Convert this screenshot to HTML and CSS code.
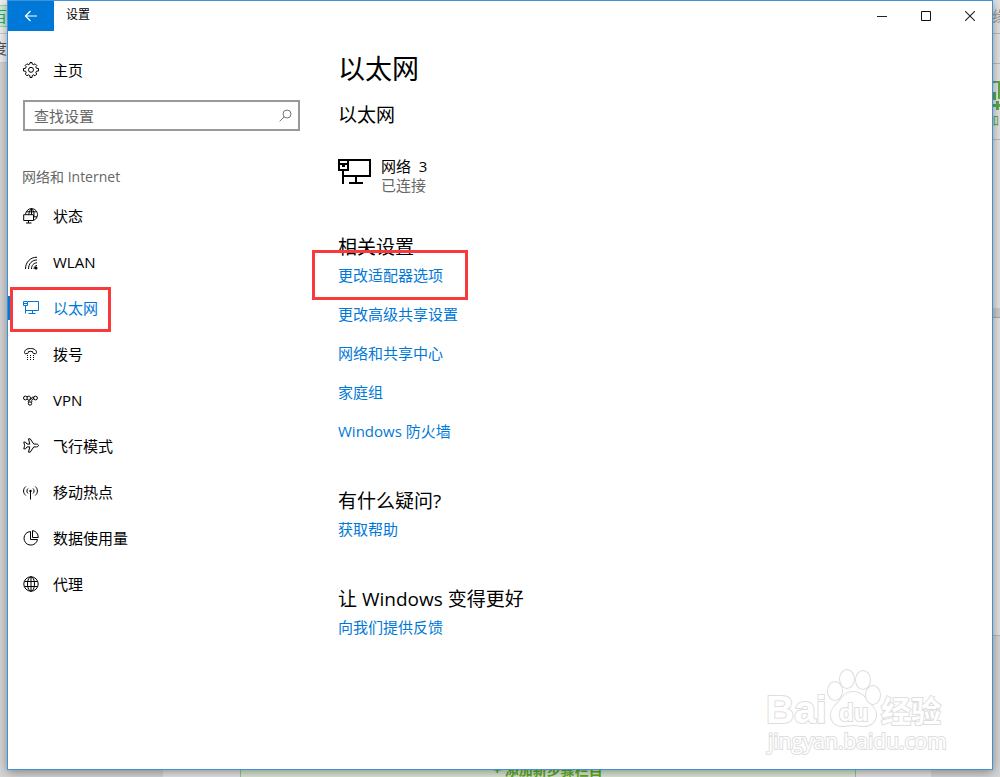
FILE: index.html
```html
<!DOCTYPE html>
<html lang="zh-CN">

<head>
  <meta charset="utf-8">
  <title>设置</title>
  <link rel="stylesheet" href="styles.css">
</head>

<body>

  <div class="desktop">

    <!-- The browser page that shows around the window's edges -->
    <div class="behind" aria-hidden="true">
      <div class="behind-left"><span class="behind-tab">百</span><span class="behind-bar">度</span></div>
      <div class="behind-right">
        <span class="behind-link">缘</span>
        <span class="behind-tool">
          <svg width="12" height="30" viewBox="0 0 12 30"><path d="M0 1h8M6 0v18" stroke="#5cab4e" stroke-width="2" fill="none"/><path d="M0 11h3v8H0zM0 23h7v3H0zM3 20h3v9H3z" fill="#5cab4e"/></svg>
          <span class="behind-label">加</span>
        </span>
        <span class="behind-row"></span>
      </div>
      <div class="behind-bottom"><span>+ 添加新步骤栏目</span></div>
    </div>

    <div class="window">

      <header class="titlebar">
        <button class="back-button" type="button" aria-label="返回">
          <svg width="14" height="12" viewBox="0 0 14 12"><path d="M13 6H1.5M6.5 1L1.5 6l5 5" fill="none" stroke="#fff" stroke-width="1.2"/></svg>
        </button>
        <span class="titlebar-text">设置</span>
        <button class="window-button" type="button" aria-label="最小化">
          <svg width="10" height="10" viewBox="0 0 10 10"><path d="M0 5.5h10" stroke="#222"/></svg>
        </button>
        <button class="window-button" type="button" aria-label="最大化">
          <svg width="10" height="10" viewBox="0 0 10 10"><path d="M.5.5h9v9h-9z" fill="none" stroke="#111"/></svg>
        </button>
        <button class="window-button" type="button" aria-label="关闭">
          <svg width="10" height="10" viewBox="0 0 10 10"><path d="M0 0l10 10M10 0L0 10" stroke="#222" stroke-width="1.1"/></svg>
        </button>
      </header>

      <div class="content">

        <nav class="sidebar">
          <a class="nav-link" href="#">
            <svg class="icon" viewBox="0 0 16 16"><path d="M6.8 2 7 .5h2L9.200 2l1.600.7L12 1.700 13.800 3.500l-1 1.200.7 1.600 2 .2v2.500l-2 .2-.7 1.600 1 1.200L12 13.800l-1.200-1-1.600.7-.2 2H7l-.2-2-1.600-.7-1.200 1L2.200 12l1-1.200-.7-1.600-2-.2V6.500l2-.2.7-1.600-1-1.200L4 1.700l1.200 1z" fill="none" stroke="currentColor"/><circle cx="8" cy="7.800" r="2.500" fill="none" stroke="currentColor"/></svg>
            主页
          </a>

          <form class="search" action="#">
            <input class="search-input" type="search" placeholder="查找设置" aria-label="查找设置">
            <button class="search-button" type="submit" aria-label="搜索">
              <svg width="13" height="13" viewBox="0 0 13 13"><circle cx="8" cy="5" r="4" fill="none" stroke="#777"/><path d="M5.2 7.8L.6 12.4" stroke="#777"/></svg>
            </button>
          </form>

          <h2 class="nav-title">网络和 Internet</h2>

          <ul class="nav-list">
            <li><a class="nav-link" href="#">
              <svg class="icon" viewBox="0 0 16 16"><g fill="none" stroke="currentColor"><path d="M2.500 6C3.200 2.800 5.500.600 8.500.600c3.300 0 6 2.700 6 6 0 2.600-1.500 4.700-3.500 5.500M8.500.600C7 2 6 3.800 5.800 6.500M8.500.600c2.200 1.800 3 5 2.300 8.400M8.500.600v6M3.500 3.800h10M10.500 8.800h3.500"/><path d="M.7 6.700h9.800v5.800H.7zM5.500 12.500v2.500M3 15h5.500"/></g></svg>
              状态</a></li>
            <li><a class="nav-link" href="#">
              <svg class="icon" viewBox="0 0 16 16"><g fill="none" stroke="currentColor"><path d="M2.500 15C2.500 8 7.500 3.200 14 3.200M5.500 15c0-5.300 3.500-9 8.500-9M8.500 15c0-3.700 2.300-6.200 5.500-6.200M11 15c0-2 1.200-3.500 3-3.500"/></g><circle cx="13" cy="14" r="1.500" fill="currentColor"/></svg>
              WLAN</a></li>
            <li class="active"><a class="nav-link" href="#" aria-current="page">
              <svg class="icon" viewBox="0 0 16 16"><g fill="none" stroke="currentColor"><path d="M5 1.500h10.500v9H3M9.500 10.500v2.500M5.500 13.500h7M.5 1.500h4v4h-4zM2.500 5.500v8M.5 3.500h4"/></g></svg>
              以太网</a></li>
            <li><a class="nav-link" href="#">
              <svg class="icon" viewBox="0 0 16 16"><path d="M1.500 6.500C1.500 4 4 2.500 7.500 2.500s6 1.500 6 4c0 .8-.5 1.300-1.200 1.200l-1.500-.2c-.8-.1-1.200-.5-1.200-1.200v-.7c-1.400-.4-2.800-.4-4.200 0v.7c0 .7-.4 1.100-1.200 1.200l-1.500.2c-.7.1-1.200-.4-1.200-1.200z" fill="none" stroke="currentColor"/><path d="M4 9h1v1H4zM7 9h1v1H7zM10 9h1v1h-1zM4 11h1v1H4zM7 11h1v1H7zM10 11h1v1h-1zM4 13h1v1H4zM7 13h1v1H7zM10 13h1v1h-1z" fill="currentColor"/></svg>
              拨号</a></li>
            <li><a class="nav-link" href="#">
              <svg class="icon" viewBox="0 0 16 16"><g fill="none" stroke="currentColor"><circle cx="2.400" cy="6" r="1.900"/><circle cx="12.500" cy="6" r="1.900"/><circle cx="7" cy="11.500" r="1.700"/><path d="M4 5C5.500 3.500 7.500 4 7.500 6c0 2-3.200 2.500-2 4.500M4 7c1 1 2.500 1.800 3.500.5L9.500 5l1.300.3M8.500 10.500c1-1.500-.5-2 .5-3l2-1"/></g></svg>
              VPN</a></li>
            <li><a class="nav-link" href="#">
              <svg class="icon" viewBox="0 0 16 16"><path d="M5.500.8h1.700l3.600 5.300h2.700c1 0 2 .6 2 1.400s-1 1.400-2 1.400h-2.700l-3.600 5.300H5.500l1.300-5.300H4l-1.500 2H.8l.8-3.400-.8-3.400h1.700l1.500 2h2.800z" fill="none" stroke="currentColor"/></svg>
              飞行模式</a></li>
            <li><a class="nav-link" href="#">
              <svg class="icon" viewBox="0 0 16 16"><g fill="none" stroke="currentColor"><path d="M2.800 2.500c-3 2.500-3 6.500 0 9M5 4.500c-1.500 1.500-1.500 3.500 0 5M12.200 2.500c3 2.500 3 6.500 0 9M10 4.500c1.500 1.500 1.500 3.500 0 5M7.500 7v8.500"/></g><circle cx="7.500" cy="7" r="1.200" fill="currentColor"/></svg>
              移动热点</a></li>
            <li><a class="nav-link" href="#">
              <svg class="icon" viewBox="0 0 16 16"><g fill="none" stroke="currentColor"><path d="M7.500 1.500A6.800 6.800 0 1 0 14.500 9.500H7.500zM9.500.6v6.900h5.800C15.200 3.800 13 1 9.500.6z"/></g></svg>
              数据使用量</a></li>
            <li><a class="nav-link" href="#">
              <svg class="icon" viewBox="0 0 16 16"><g fill="none" stroke="currentColor"><circle cx="8" cy="8" r="7.200"/><ellipse cx="8" cy="8" rx="3.500" ry="7.200"/><path d="M8 .8v14.400M1.500 5.500h13M1.500 10.500h13"/></g></svg>
              代理</a></li>
          </ul>
        </nav>

        <main class="main">
          <h1>以太网</h1>
          <h2>以太网</h2>

          <div class="network">
            <svg width="34" height="28" viewBox="0 0 34 28"><g fill="none" stroke="#000" stroke-width="2"><path d="M10 3h22v16H5M18 19v6M11 26h14M1 3h9v10H1zM5 13v14M1 7h9"/></g><path d="M4 8h3v2H4z"/></svg>
            <div>
              <div class="network-name">网络&nbsp; 3</div>
              <div class="network-state">已连接</div>
            </div>
          </div>

          <section>
            <h2>相关设置</h2>
            <ul class="links">
              <li class="marked"><a href="#">更改适配器选项</a></li>
              <li><a href="#">更改高级共享设置</a></li>
              <li><a href="#">网络和共享中心</a></li>
              <li><a href="#">家庭组</a></li>
              <li><a href="#">Windows 防火墙</a></li>
            </ul>
          </section>

          <section>
            <h2>有什么疑问?</h2>
            <ul class="links">
              <li><a href="#">获取帮助</a></li>
            </ul>
          </section>

          <section>
            <h2>让 Windows 变得更好</h2>
            <ul class="links">
              <li><a href="#">向我们提供反馈</a></li>
            </ul>
          </section>
        </main>

      </div>

      <svg class="watermark" width="190" height="96" viewBox="0 0 190 96">
        <g class="watermark-shape">
          <text class="watermark-brand" x="6" y="59">Bai</text>
          <path d="M93 28c-6 0-9 3-12 7-3 5-10 8-10 16 0 7 5 11 11 11 4 0 7-1 11-1s7 1 11 1c6 0 12-4 12-11 0-8-7-11-10-16-3-4-7-7-13-7z"/>
          <ellipse cx="75" cy="27" rx="7" ry="9"/>
          <ellipse cx="87" cy="15" rx="7" ry="9"/>
          <ellipse cx="103" cy="16" rx="7" ry="9"/>
          <ellipse cx="113" cy="31" rx="7" ry="9"/>
          <text class="watermark-du" x="79" y="57">du</text>
          <text class="watermark-cn" x="121" y="58">经验</text>
          <text class="watermark-url" x="8" y="85">jingyan.baidu.com</text>
        </g>
      </svg>

    </div>
  </div>

</body>

</html>
```
FILE: styles.css
```css
*,
*::after {
  box-sizing: border-box;
}

body {
  margin: 0;
  font-family: "Open Sans", "Noto Sans CJK SC", sans-serif;
  font-size: 15px;
  line-height: 20px;
  color: #000;
}

h1, h2, ul {
  margin: 0;
  padding: 0;
  font-weight: normal;
}

ul {
  list-style: none;
}

a {
  color: #0078d7;
  text-decoration: none;
}

button {
  display: flex;
  align-items: center;
  justify-content: center;
  border: none;
  padding: 0;
  background: none;
}

.desktop {
  position: relative;
  min-height: 100vh;
  padding: 0 7px 7px;
  background: #d6d6d6;
  overflow: hidden;
}

/* Page behind the window */
.behind-left {
  position: absolute;
  top: 0;
  left: 0;
  width: 20px;
  height: 63px;
  background: #f0f0f0;
  border-bottom: 1px solid #ccc;
}

.behind-tab,
.behind-bar {
  position: absolute;
  right: 13px;
}

.behind-tab {
  top: 5px;
  height: 22px;
  color: #1fae7c;
  background: #d2efd8;
  border: 1px solid #98d6a0;
  border-width: 1px 0;
}

.behind-bar {
  top: 33px;
  height: 29px;
  padding-top: 4px;
  color: #555;
  border-top: 1px solid #ccc;
}

.behind-right {
  position: absolute;
  top: 0;
  right: 0;
  width: 20px;
  height: 636px;
  background: #e4e4e4;
  border-bottom: 1px solid #bbb;
}

.behind-link {
  position: absolute;
  top: 0;
  left: 12px;
  height: 34px;
  padding-top: 6px;
  color: #999;
  border-bottom: 1px solid #bbb;
}

.behind-tool {
  position: absolute;
  top: 63px;
  left: 13px;
  height: 77px;
  padding-top: 17px;
  font-size: 12px;
  color: #5cab4e;
  border: 1px solid #bbb;
  border-width: 1px 0;
}

.behind-tool svg {
  display: block;
}

.behind-label {
  margin-left: -6px;
}

.behind-row {
  position: absolute;
  top: 308px;
  right: 0;
  width: 8px;
  height: 10px;
  background: #ccc;
  border-bottom: 1px solid #aaa;
}

.behind-bottom {
  position: absolute;
  bottom: 0;
  left: 163px;
  right: 69px;
  height: 20px;
  padding: 0 75px 0 77px;
  background: #e6e6e6;
}

.behind-bottom span {
  display: block;
  height: 20px;
  font-size: 14px;
  line-height: 26px;
  font-weight: bold;
  text-align: center;
  color: #5fae1e;
  background: #dcead8;
  border: 1px solid #9cc79c;
  border-width: 0 1px;
}

/* Settings window */
.window {
  position: relative;
  min-height: calc(100vh - 7px);
  background: #fff;
  border: 1px solid #3c93dc;
  box-shadow: 0 2px 10px rgba(0, 0, 0, 0.4);
}

.titlebar {
  display: flex;
  height: 30px;
}

.back-button {
  width: 46px;
  background: #0078d7;
}

.titlebar-text {
  flex: 1;
  padding-left: 12px;
  font-size: 12px;
  line-height: 28px;
}

.window-button {
  width: 44px;
}

.content {
  display: grid;
  grid-template-columns: 292px 1fr;
  column-gap: 38px;
  padding-top: 16px;
}

.nav-link {
  display: flex;
  align-items: center;
  gap: 14px;
  height: 46px;
  padding-left: 15px;
  color: #000;
}

.icon {
  width: 16px;
  height: 16px;
}

.search {
  display: flex;
  height: 31px;
  margin: 7px 0 36px 15px;
  border: 2px solid #999;
}

.search-input {
  flex: 1;
  min-width: 0;
  padding: 0 0 0 9px;
  border: none;
  outline: none;
  font: inherit;
}

.search-input::placeholder {
  color: #666;
}

.search-button {
  width: 26px;
}

.nav-title {
  padding-left: 14px;
  margin-bottom: 6px;
  font-size: 14px;
  color: #666;
}

.active {
  position: relative;
  padding: 11px 0;
}

.active .nav-link {
  height: 24px;
  padding-left: 13px;
  border-left: 2px solid #0078d7;
  color: #0078d7;
}

/* Red frames drawn over the items to click */
.active::after,
.marked::after {
  content: "";
  position: absolute;
  border: 3px solid #f83a3d;
  pointer-events: none;
}

.active::after {
  top: 2px;
  left: 2px;
  width: 101px;
  height: 45px;
}

.marked {
  position: relative;
}

.marked::after {
  top: -15px;
  left: -26px;
  width: 156px;
  height: 50px;
}

.main {
  padding-top: 4px;
}

.main h1 {
  font-size: 27px;
  line-height: 36px;
}

.main h2 {
  font-size: 19px;
  line-height: 28px;
}

.main > h2 {
  margin-top: 14px;
}

.network {
  display: flex;
  gap: 9px;
  margin: 28px 0 38px;
  line-height: 19px;
}

.network-state {
  color: #666;
}

.links {
  display: grid;
  gap: 19px;
  padding: 4px 0 46px;
}

.watermark {
  position: absolute;
  right: 42px;
  bottom: 9px;
}

.watermark-shape {
  fill: #fff;
  stroke: #dedede;
  stroke-width: 2px;
  paint-order: stroke;
}

.watermark-brand {
  font: bold 39px "Liberation Sans", sans-serif;
}

.watermark-du {
  font: bold 24px "Liberation Sans", sans-serif;
}

.watermark-cn {
  font: bold 30px "Noto Sans CJK SC", sans-serif;
}

.watermark-url {
  font: 21px "Open Sans", sans-serif;
}
```
